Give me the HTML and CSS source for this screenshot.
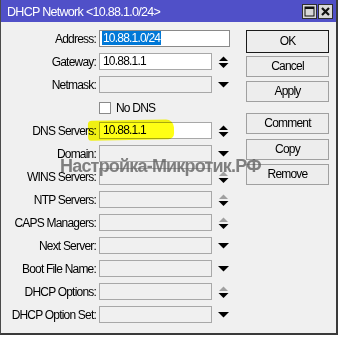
FILE: index.html
```html
<!DOCTYPE html>
<html lang="en">
<head>
    <meta charset="UTF-8">
    <meta name="viewport" content="width=device-width, initial-scale=1.0">
    <title>DHCP Network</title>
    <link rel="stylesheet" href="styles.css">
</head>
<body>
    <div class="window">
        <!-- Title bar -->
        <div class="titlebar">
            <span class="title">DHCP Network &lt;10.88.1.0/24&gt;</span>
            <div class="title-buttons">
                <span class="tb-btn">
                    <svg width="11" height="11" viewBox="0 0 11 11"><rect x="1" y="1" width="9" height="9" fill="none" stroke="#111" stroke-width="1"/><rect x="1" y="1" width="9" height="2" fill="#111"/></svg>
                </span>
                <span class="tb-btn">
                    <svg width="11" height="11" viewBox="0 0 11 11"><path d="M2 2 L9 9 M9 2 L2 9" stroke="#111" stroke-width="2.2"/></svg>
                </span>
            </div>
        </div>

        <div class="content">
            <div class="form">
                <div class="row">
                    <label>Address:</label>
                    <div class="field wide"><span class="selected">10.88.1.0/24</span></div>
                </div>
                <div class="row">
                    <label>Gateway:</label>
                    <div class="field">10.88.1.1</div>
                    <svg class="spin" width="11" height="12" viewBox="0 0 11 12"><polygon points="1,5 5.5,0.5 10,5" fill="#000"/><polygon points="0.5,7 10.5,7 5.5,12" fill="#000"/></svg>
                </div>
                <div class="row">
                    <label>Netmask:</label>
                    <div class="field off"></div>
                    <svg class="drop" width="11" height="6" viewBox="0 0 11 6"><polygon points="0,0 11,0 5.5,5.5" fill="#000"/></svg>
                </div>
                <div class="row">
                    <label></label>
                    <span class="check"></span>
                    <span class="check-label">No DNS</span>
                </div>
                <div class="row">
                    <label>DNS Servers:</label>
                    <div class="field">10.88.1.1</div>
                    <svg class="spin" width="11" height="12" viewBox="0 0 11 12"><polygon points="1,5 5.5,0.5 10,5" fill="#000"/><polygon points="0.5,7 10.5,7 5.5,12" fill="#000"/></svg>
                </div>
                <div class="row">
                    <label>Domain:</label>
                    <div class="field off"></div>
                    <svg class="drop" width="11" height="6" viewBox="0 0 11 6"><polygon points="0,0 11,0 5.5,5.5" fill="#000"/></svg>
                </div>
                <div class="row">
                    <label>WINS Servers:</label>
                    <div class="field off"></div>
                    <svg class="spin" width="11" height="12" viewBox="0 0 11 12"><polygon points="1,5 5.5,0.5 10,5" fill="#a0a0a0"/><polygon points="0.5,7 10.5,7 5.5,12" fill="#000"/></svg>
                </div>
                <div class="row">
                    <label>NTP Servers:</label>
                    <div class="field off"></div>
                    <svg class="spin" width="11" height="12" viewBox="0 0 11 12"><polygon points="1,5 5.5,0.5 10,5" fill="#a0a0a0"/><polygon points="0.5,7 10.5,7 5.5,12" fill="#000"/></svg>
                </div>
                <div class="row">
                    <label>CAPS Managers:</label>
                    <div class="field off"></div>
                    <svg class="spin" width="11" height="12" viewBox="0 0 11 12"><polygon points="1,5 5.5,0.5 10,5" fill="#a0a0a0"/><polygon points="0.5,7 10.5,7 5.5,12" fill="#000"/></svg>
                </div>
                <div class="row">
                    <label>Next Server:</label>
                    <div class="field off"></div>
                    <svg class="drop" width="11" height="6" viewBox="0 0 11 6"><polygon points="0,0 11,0 5.5,5.5" fill="#000"/></svg>
                </div>
                <div class="row">
                    <label>Boot File Name:</label>
                    <div class="field off"></div>
                    <svg class="drop" width="11" height="6" viewBox="0 0 11 6"><polygon points="0,0 11,0 5.5,5.5" fill="#000"/></svg>
                </div>
                <div class="row">
                    <label>DHCP Options:</label>
                    <div class="field off"></div>
                    <svg class="spin" width="11" height="12" viewBox="0 0 11 12"><polygon points="1,5 5.5,0.5 10,5" fill="#a0a0a0"/><polygon points="0.5,7 10.5,7 5.5,12" fill="#000"/></svg>
                </div>
                <div class="row">
                    <label>DHCP Option Set:</label>
                    <div class="field off"></div>
                    <svg class="drop" width="11" height="6" viewBox="0 0 11 6"><polygon points="0,0 11,0 5.5,5.5" fill="#000"/></svg>
                </div>
            </div>

            <div class="actions">
                <div class="btn btn-ok">OK</div>
                <div class="btn">Cancel</div>
                <div class="btn">Apply</div>
                <div class="btn btn-gap">Comment</div>
                <div class="btn">Copy</div>
                <div class="btn">Remove</div>
            </div>
        </div>

        <!-- marker stroke and site watermark laid over the form -->
        <div class="marker"></div>
        <div class="watermark">Настройка-Микротик.РФ</div>
    </div>
</body>
</html>
```

FILE: styles.css
```css
body {
    margin: 0;
    padding: 0;
    background-color: #ffffff;
    font-family: "Liberation Sans", Arial, sans-serif;
    font-size: 12px;
    letter-spacing: -0.8px;
    color: #000;
}

.window {
    position: relative;
    width: 335px;
    height: 333px;
    background-color: #f0f0f0;
    border-left: 1px solid #4a4a4a;
    border-right: 2px solid #3a3a3a;
    border-bottom: 2px solid #3a3a3a;
    overflow: hidden;
}

.titlebar {
    display: flex;
    align-items: center;
    justify-content: space-between;
    height: 22px;
    margin-left: -1px;
    padding: 0 3px 0 7px;
    background-color: #5050c8;
    color: white;
}

.title {
    font-size: 12.5px;
    letter-spacing: -0.7px;
    padding-top: 2px;
}

.title-buttons {
    display: flex;
    gap: 1px;
}

.tb-btn {
    display: flex;
    align-items: center;
    justify-content: center;
    width: 13px;
    height: 13px;
    background-color: #d8d8d8;
    border: 1px solid #303030;
}

.content {
    display: flex;
    padding-top: 8px;
}

.form {
    width: 245px;
}

.row {
    display: flex;
    align-items: center;
    height: 17px;
    margin-bottom: 6px;
}

.row label {
    width: 95px;
    flex-shrink: 0;
    text-align: right;
    white-space: nowrap;
}

.field {
    box-sizing: border-box;
    width: 113px;
    height: 17px;
    margin-left: 3px;
    padding: 0 3px;
    background-color: white;
    border: 1px solid #a8a8a8;
    line-height: 15px;
    white-space: nowrap;
}

.field.wide {
    width: 131px;
    border-color: #8a8a8a;
    padding-left: 2px;
}

.field.off {
    background-color: #f0f0f0;
}

.selected {
    display: inline-block;
    background-color: #0078d7;
    color: white;
    padding: 0 1px;
    line-height: 14px;
}

.spin,
.drop {
    margin-left: 6px;
}

.check {
    box-sizing: border-box;
    width: 12px;
    height: 12px;
    margin-left: 3px;
    background-color: white;
    border: 1px solid #8a8a8a;
}

.check-label {
    margin-left: 5px;
}

.actions {
    display: flex;
    flex-direction: column;
    width: 83px;
}

.btn {
    box-sizing: border-box;
    height: 21px;
    margin-bottom: 4px;
    border: 1px solid #a0a0a0;
    background-color: #ededed;
    text-align: center;
    line-height: 19px;
}

.btn-ok {
    height: 23px;
    margin-bottom: 3px;
    border-color: #1a1a1a;
    line-height: 21px;
}

.btn-gap {
    margin-top: 7px;
    margin-bottom: 5px;
}

.marker {
    position: absolute;
    left: 87px;
    top: 120px;
    width: 86px;
    height: 20px;
    background-color: #ffff00;
    border-radius: 4px 8px 6px 3px;
    transform: rotate(-1deg);
    mix-blend-mode: multiply;
    opacity: 0.92;
}

.watermark {
    position: absolute;
    left: 59px;
    top: 156px;
    font-weight: bold;
    font-size: 18px;
    letter-spacing: -0.8px;
    color: rgba(90, 90, 90, 0.75);
    white-space: nowrap;
    pointer-events: none;
}
```
